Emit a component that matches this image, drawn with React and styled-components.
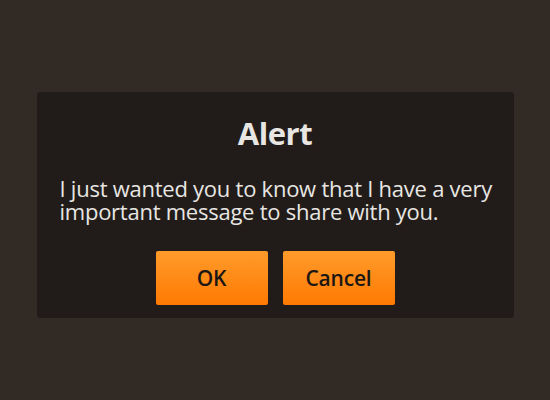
import React from "react";
import styled, { createGlobalStyle } from "styled-components";

const Global = createGlobalStyle`
  html, body { margin: 0; padding: 0; }
  body {
    background: #322a24;
    font-family: "Open Sans", "Noto Sans", sans-serif;
    width: 550px;
    height: 400px;
  }
`;

const Page = styled.div`
  width: 550px;
  height: 400px;
  display: flex;
  justify-content: center;
  align-items: flex-start;
  padding-top: 92px;
  box-sizing: border-box;
`;

const Dialog = styled.div`
  width: 477px;
  height: 226px;
  box-sizing: border-box;
  background: #211c19;
  border-radius: 3px;
  padding: 20px 15px 13px 23px;
  display: flex;
  flex-direction: column;
  align-items: center;
`;

const Title = styled.h1`
  margin: 0 8px 0 0;
  font-size: 31px;
  font-weight: 700;
  letter-spacing: -0.4px;
  color: #e8e6e3;
  line-height: normal;
`;

const Message = styled.p`
  margin: 23px 0 0;
  align-self: stretch;
  font-size: 22px;
  letter-spacing: -0.25px;
  line-height: 23px;
  color: #e8e6e3;
`;

const Actions = styled.div`
  margin: auto 8px 0 0;
  display: flex;
  gap: 15px;
`;

const Button = styled.button`
  width: 112px;
  height: 54px;
  border: none;
  border-radius: 2px;
  background: linear-gradient(#ff9b2b, #ff7a02);
  color: #1c1714;
  font-family: inherit;
  font-size: 21px;
  font-weight: 600;
  letter-spacing: -0.2px;
  padding: 0;
`;

export default function App() {
  return (
    <>
      <Global />
      <Page>
        <Dialog>
          <Title>Alert</Title>
          <Message>
            I just wanted you to know that I have a very important message to
            share with you.
          </Message>
          <Actions>
            <Button>OK</Button>
            <Button>Cancel</Button>
          </Actions>
        </Dialog>
      </Page>
    </>
  );
}
